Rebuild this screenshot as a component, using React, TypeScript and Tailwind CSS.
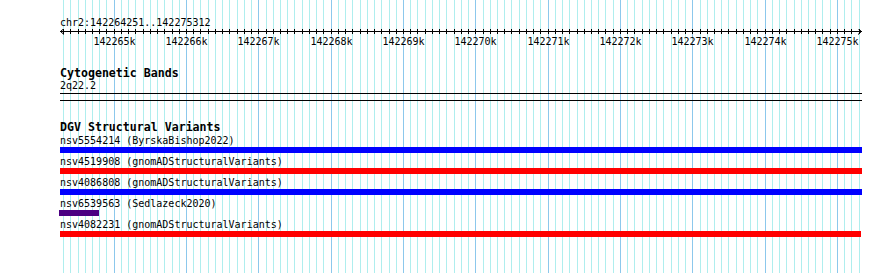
import React from 'react';

const START = 142264251;
const END = 142275312;
const X0 = 60;
const W = 800;

const px = (bp: number) => X0 + ((bp - START) * W) / (END - START);

const ticks: number[] = [];
for (let bp = Math.ceil(START / 100) * 100; bp <= END; bp += 100) ticks.push(bp);

function Grid() {
  return (
    <svg className="absolute inset-0" width={890} height={273} shapeRendering="crispEdges">
      {ticks.map((bp) => {
        const x = Math.floor(px(bp)) + 0.5;
        const major = bp % 1000 === 0;
        return <line key={bp} x1={x} x2={x} y1={0} y2={273} stroke={major ? '#8cc8ec' : '#afeeee'} strokeWidth={1} />;
      })}
    </svg>
  );
}

function Ruler() {
  return (
    <svg className="block" width={890} height={18} shapeRendering="crispEdges">
      <line x1={60} x2={862} y1={2.5} y2={2.5} stroke="#000" />
      <polyline points="64,-0.5 60.5,2.5 64,5.5" fill="none" stroke="#000" shapeRendering="auto" />
      <polyline points="858,-0.5 861.5,2.5 858,5.5" fill="none" stroke="#000" shapeRendering="auto" />
      {ticks.map((bp) => {
        const x = Math.floor(px(bp)) + 0.5;
        return <line key={bp} x1={x} x2={x} y1={0} y2={5} stroke="#000" />;
      })}
      {ticks
        .filter((bp) => bp % 1000 === 0)
        .map((bp) => (
          <text
            key={bp}
            x={Math.floor(px(bp)) + 0.5}
            y={16}
            textAnchor="middle"
            fontSize={10}
            fontFamily="'DejaVu Sans Mono', monospace"
            fill="#000"
          >
            {bp / 1000}k
          </text>
        ))}
    </svg>
  );
}

const variants = [
  { name: 'nsv5554214 (ByrskaBishop2022)', color: 'bg-[#0000ff]', bar: 'ml-[60px] w-[802px]' },
  { name: 'nsv4519908 (gnomADStructuralVariants)', color: 'bg-[#ff0000]', bar: 'ml-[60px] w-[802px]' },
  { name: 'nsv4086808 (gnomADStructuralVariants)', color: 'bg-[#0000ff]', bar: 'ml-[60px] w-[802px]' },
  { name: 'nsv6539563 (Sedlazeck2020)', color: 'bg-[#4b0082]', bar: 'ml-[59px] w-[40px]' },
  { name: 'nsv4082231 (gnomADStructuralVariants)', color: 'bg-[#ff0000]', bar: 'ml-[60px] w-[801px]' },
];

export default function App() {
  return (
    <div className="relative w-[890px] h-[273px] overflow-hidden bg-white text-black text-[10px] font-['DejaVu_Sans_Mono',monospace]">
      <Grid />
      <div className="relative">
        <div className="pt-[17px] pl-[60px] leading-[12px]">chr2:142264251..142275312</div>
        <Ruler />
        <div className="mt-[21px] pl-[60px] font-bold text-[11.6px] leading-[11px]">Cytogenetic Bands</div>
        <div className="mt-[1px] pl-[60px] leading-[12px]">2q22.2</div>
        <div className="mt-[1px] ml-[60px] w-[802px] h-px bg-black" />
        <div className="mt-[6px] ml-[60px] w-[802px] h-px bg-black" />
        <div className="mt-[21px] pl-[60px] font-bold text-[11.6px] leading-[10px]">DGV Structural Variants</div>
        {variants.map((v) => (
          <div key={v.name} className="flex flex-col">
            <div className="pt-[3px] pl-[60px] leading-[12px]">{v.name}</div>
            <div className={`h-[6px] ${v.bar} ${v.color}`} />
          </div>
        ))}
      </div>
    </div>
  );
}
